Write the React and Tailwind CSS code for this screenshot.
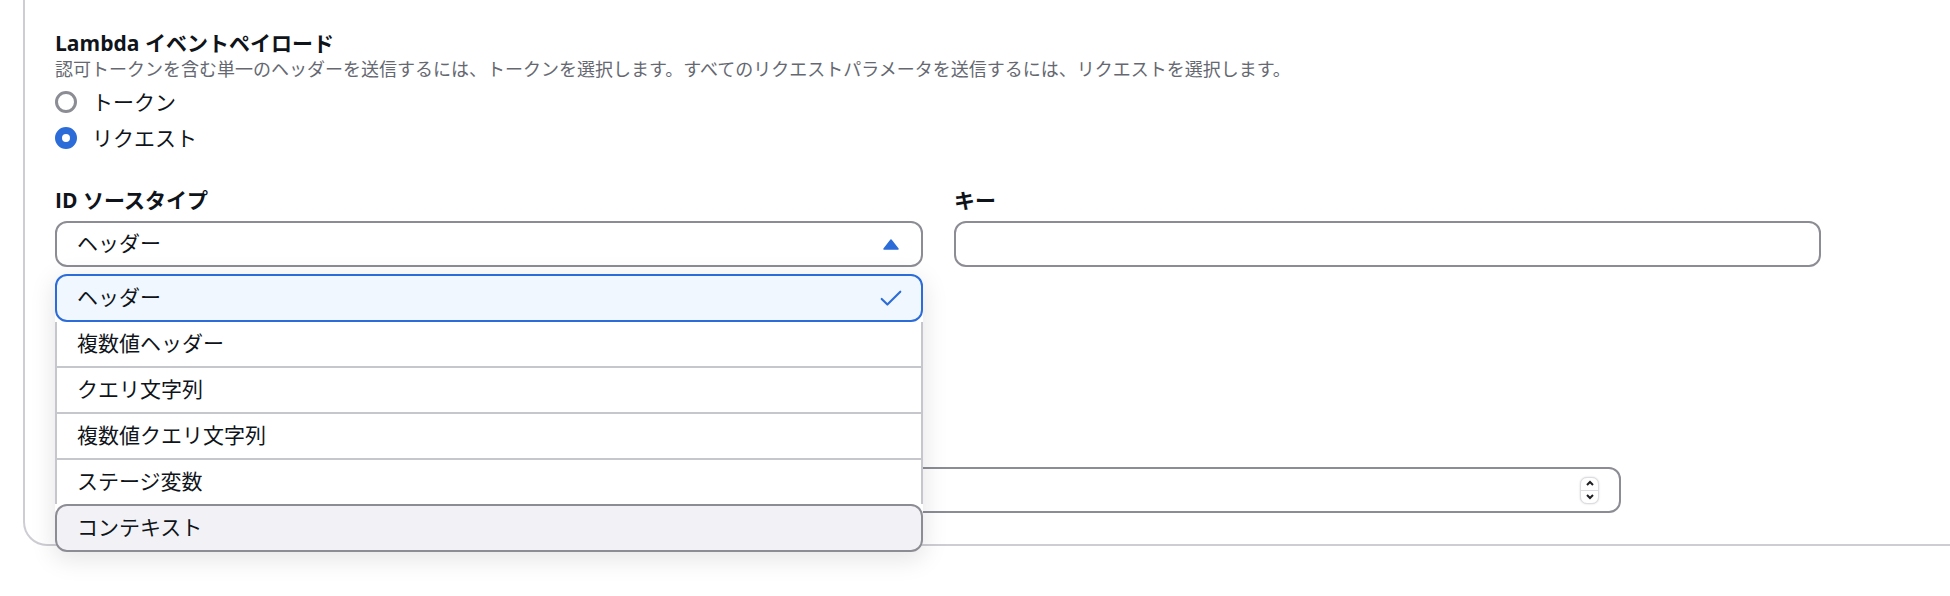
import { useState } from 'react';

const BLUE = '#2c6cd8';

const OPTIONS = ['ヘッダー', '複数値ヘッダー', 'クエリ文字列', '複数値クエリ文字列', 'ステージ変数', 'コンテキスト'];

function Radio({ checked, label }) {
  return (
    <label className="flex items-center h-[30px] gap-[15px]">
      {checked ? (
        <span className="w-[22px] h-[22px] rounded-full border-[7px] border-[#2c6cd8] bg-white" />
      ) : (
        <span className="w-[22px] h-[22px] rounded-full border-[3px] border-[#8c8c94] bg-white" />
      )}
      <span className="text-[21px] leading-[30px] text-[#0f141a]">{label}</span>
    </label>
  );
}

function CheckIcon() {
  return (
    <svg width="24" height="24" viewBox="0 0 16 16" fill="none">
      <polyline points="1.8 8.6 5.6 12.4 14.2 3.8" stroke={BLUE} strokeWidth="1.4" strokeLinecap="round" strokeLinejoin="round" />
    </svg>
  );
}

function CaretUp() {
  return (
    <svg width="16" height="11" viewBox="0 0 16 11">
      <path d="M8 1 L15 10 L1 10 Z" fill={BLUE} stroke={BLUE} strokeWidth="1.5" strokeLinejoin="round" />
    </svg>
  );
}

function Spinner() {
  return (
    <div className="w-[19px] h-[27px] rounded-[7px] bg-white border border-[#dcdce1] shadow-[0_0_2px_rgba(0,0,0,0.18)] flex flex-col">
      <div className="flex-1 flex items-center justify-center border-b border-[#dcdce1]">
        <svg width="10" height="7" viewBox="0 0 10 7"><polyline points="2 5 5 2 8 5" fill="none" stroke="#1f1f23" strokeWidth="2" /></svg>
      </div>
      <div className="flex-1 flex items-center justify-center">
        <svg width="10" height="7" viewBox="0 0 10 7"><polyline points="2 2 5 5 8 2" fill="none" stroke="#1f1f23" strokeWidth="2" /></svg>
      </div>
    </div>
  );
}

export default function App() {
  const [selected] = useState(0);
  const hovered = OPTIONS.length - 1;

  return (
    <div className="w-[1950px] h-[596px] overflow-hidden bg-white font-['Open_Sans','Noto_Sans_CJK_JP',sans-serif] text-[#0f141a]">
      <div className="ml-[23px] w-[2100px] border-l-2 border-b-2 border-[#cdcdd3] rounded-bl-[24px] pl-[30px] pt-[28px] pb-[31px]">
        {/* Lambda event payload */}
        <h3 className="text-[21px] leading-[30px] font-bold">Lambda イベントペイロード</h3>
        <p className="-mt-px text-[18px] leading-[24px] text-[#656871]">
          認可トークンを含む単一のヘッダーを送信するには、トークンを選択します。すべてのリクエストパラメータを送信するには、リクエストを選択します。
        </p>
        <div className="mt-[6px] flex flex-col gap-[6px]">
          <Radio label="トークン" />
          <Radio checked label="リクエスト" />
        </div>

        {/* Identity source */}
        <div className="mt-[32px] grid grid-cols-[868px_867px] gap-x-[31px]">
          <div>
            <div className="text-[21px] leading-[30px] font-bold">ID ソースタイプ</div>
            <div className="relative mt-[6px]">
              <div className="h-[46px] border-2 border-[#8c8c94] rounded-[12px] bg-white flex items-center justify-between pl-[20px] pr-[22px]">
                <span className="text-[21px]">{OPTIONS[selected]}</span>
                <CaretUp />
              </div>

              {/* open dropdown */}
              <div className="absolute left-0 top-[53px] w-full z-10 shadow-[0_6px_24px_2px_rgba(0,7,22,0.10)] rounded-[12px] bg-white">
                {OPTIONS.map((o, i) => {
                  if (i === selected) {
                    return (
                      <div key={o} className="h-[48px] border-2 border-[#2c6cd8] rounded-[12px] bg-[#f0f7fe] flex items-center justify-between pl-[20px] pr-[18px]">
                        <span className="text-[21px]">{o}</span>
                        <CheckIcon />
                      </div>
                    );
                  }
                  if (i === hovered) {
                    return (
                      <div key={o} className="h-[48px] border-2 border-[#8c8c94] rounded-[12px] bg-[#f2f2f6] flex items-center pl-[20px]">
                        <span className="text-[21px]">{o}</span>
                      </div>
                    );
                  }
                  const last = i === hovered - 1;
                  return (
                    <div key={o} className={`border-x-2 border-[#c6c6cd] bg-white flex items-center pl-[20px] ${last ? 'h-[44px]' : 'h-[46px] border-b-2'}`}>
                      <span className="text-[21px]">{o}</span>
                    </div>
                  );
                })}
              </div>
            </div>
          </div>

          <div>
            <div className="text-[21px] leading-[30px] font-bold">キー</div>
            <div className="mt-[6px] h-[46px] border-2 border-[#8c8c94] rounded-[12px] bg-white" />
          </div>
        </div>

        {/* TTL (under the dropdown) */}
        <div className="mt-[200px] w-[1566px] h-[46px] border-2 border-[#8c8c94] rounded-[12px] bg-white flex items-center justify-end pr-[20px]">
          <Spinner />
        </div>
      </div>
    </div>
  );
}
